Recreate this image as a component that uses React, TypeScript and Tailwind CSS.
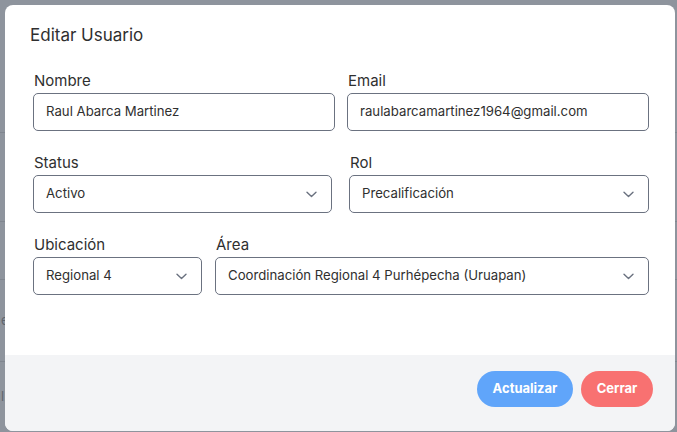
import React from "react";

function Chevron() {
  return (
    <svg width="11" height="7" viewBox="0 0 11 7" fill="none" className="shrink-0">
      <path d="M1 1.2l4.5 4.3L10 1.2" stroke="#6b7280" strokeWidth="1.4" strokeLinecap="round" strokeLinejoin="round" />
    </svg>
  );
}

function Label({ children }: { children: React.ReactNode }) {
  return <div className="mb-px text-[15px] leading-[22px] text-[#2f2f2f] pl-px">{children}</div>;
}

function TextBox({ value }: { value: string }) {
  return (
    <div className="flex h-[38px] items-center rounded-[5px] border border-[#6b7280] px-3 text-[13.2px] text-[#2f2f2f]">
      {value}
    </div>
  );
}

function SelectBox({ value }: { value: string }) {
  return (
    <div className="flex h-[38px] items-center justify-between rounded-[5px] border border-[#6b7280] pl-3 pr-[14px] text-[13.2px] text-[#2f2f2f]">
      <span>{value}</span>
      <Chevron />
    </div>
  );
}

export default function App() {
  return (
    <div className="relative h-[432px] w-[677px] overflow-hidden bg-[#8e949d] font-['Inter',sans-serif]">
      {/* dimmed page behind the overlay */}
      <div className="flex flex-col">
        <div className="h-[133px] border-b border-[#80868f]" />
        <div className="h-[89px] border-b border-[#80868f]" />
        <div className="h-[58px] border-b border-[#80868f]" />
        <div className="flex h-[82px] items-center border-b border-[#80868f] text-[13px] text-[#5f656d]">
          <span className="pl-px">e</span>
        </div>
        <div className="flex h-[70px] items-center text-[13px] text-[#5f656d]">
          <span className="pl-px">l.</span>
        </div>
      </div>

      {/* modal */}
      <div className="absolute left-[5px] top-[5px] flex h-[426px] w-[670px] flex-col overflow-hidden rounded-lg bg-white">
        <div className="h-[350px] pl-[28px] pr-[26px] pt-4">
          <div className="-ml-[3px] text-[17px] leading-7 text-[#2f2f2f]">Editar Usuario</div>

          <div className="mt-[21px] grid grid-cols-2 gap-x-3">
            <div>
              <Label>Nombre</Label>
              <TextBox value="Raul Abarca Martinez" />
            </div>
            <div>
              <Label>Email</Label>
              <TextBox value="raulabarcamartinez1964@gmail.com" />
            </div>
          </div>

          <div className="mt-[21px] flex gap-[17px]">
            <div className="w-[299px]">
              <Label>Status</Label>
              <SelectBox value="Activo" />
            </div>
            <div className="flex-1">
              <Label>Rol</Label>
              <SelectBox value="Precalificación" />
            </div>
          </div>

          <div className="mt-[21px] flex gap-[13px]">
            <div className="w-[169px]">
              <Label>Ubicación</Label>
              <SelectBox value="Regional 4" />
            </div>
            <div className="flex-1">
              <Label>Área</Label>
              <SelectBox value="Coordinación Regional 4 Purhépecha (Uruapan)" />
            </div>
          </div>
        </div>

        <div className="flex flex-1 items-start justify-end gap-2 bg-[#f3f4f6] pr-[22px] pt-4">
          <button className="flex h-9 w-24 items-center justify-center rounded-full bg-[#60a5fa] text-[13px] font-bold text-white">
            Actualizar
          </button>
          <button className="flex h-9 w-[72px] items-center justify-center rounded-full bg-[#f87171] text-[13px] font-bold text-white">
            Cerrar
          </button>
        </div>
      </div>
    </div>
  );
}
